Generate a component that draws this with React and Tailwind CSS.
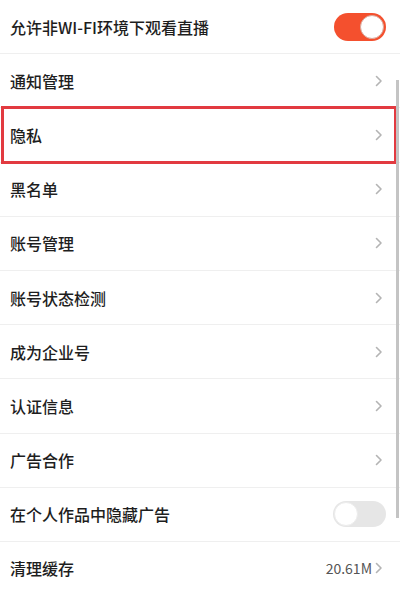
import React from 'react';

const rows = [
  { label: '允许非WI-FI环境下观看直播', type: 'toggle', on: true },
  { label: '通知管理', type: 'link' },
  { label: '隐私', type: 'link', highlight: true },
  { label: '黑名单', type: 'link' },
  { label: '账号管理', type: 'link' },
  { label: '账号状态检测', type: 'link' },
  { label: '成为企业号', type: 'link' },
  { label: '认证信息', type: 'link' },
  { label: '广告合作', type: 'link' },
  { label: '在个人作品中隐藏广告', type: 'toggle', on: false },
  { label: '清理缓存', type: 'link', value: '20.61M' },
];

function Chevron() {
  return (
    <svg width="8" height="12" viewBox="0 0 8 12" className="shrink-0">
      <path d="M1.5 1.5 L6 6 L1.5 10.5" fill="none" stroke="#b4b4b4" strokeWidth="1.6" strokeLinecap="round" strokeLinejoin="round" />
    </svg>
  );
}

function Toggle({ on }) {
  return on ? (
    <div className="w-[52px] h-[28px] rounded-full bg-[#f4502e] flex items-center justify-end pr-[2px]">
      <div className="w-[24px] h-[24px] rounded-full bg-white border border-[#d9a79a]" />
    </div>
  ) : (
    <div className="w-[53px] h-[26px] rounded-full bg-[#e6e6e6] flex items-center pl-[1px]">
      <div className="w-[24px] h-[24px] rounded-full bg-white border border-[#ececec]" />
    </div>
  );
}

export default function App() {
  return (
    <div
      className="relative w-[400px] h-[595px] bg-white flex flex-col overflow-hidden"
      style={{ fontFamily: '"Noto Sans CJK SC", "Noto Sans", sans-serif' }}
    >
      {rows.map((row, i) => (
        <div
          key={row.label}
          className={`relative flex-1 flex items-center justify-between pl-[10px] ${
            row.type === 'toggle' ? 'pr-[14px]' : 'pr-[17px]'
          } ${i < rows.length - 1 ? 'border-b border-[#efefef]' : ''}`}
        >
          <span className="text-[16px] font-medium text-[#1e1e1e] leading-none">{row.label}</span>
          {row.type === 'toggle' ? (
            <Toggle on={row.on} />
          ) : (
            <div className="flex items-center gap-[3px]">
              {row.value && <span className="text-[14px] text-[#555] leading-none">{row.value}</span>}
              <Chevron />
            </div>
          )}
          {row.highlight && (
            <div className="absolute left-[1px] right-[3px] top-[-2px] bottom-[-2px] border-[3px] border-[#e23a40] pointer-events-none" />
          )}
        </div>
      ))}
      <div className="absolute right-[1px] top-[80px] h-[438px] w-[3px] bg-[#c4c4c4]" />
    </div>
  );
}
